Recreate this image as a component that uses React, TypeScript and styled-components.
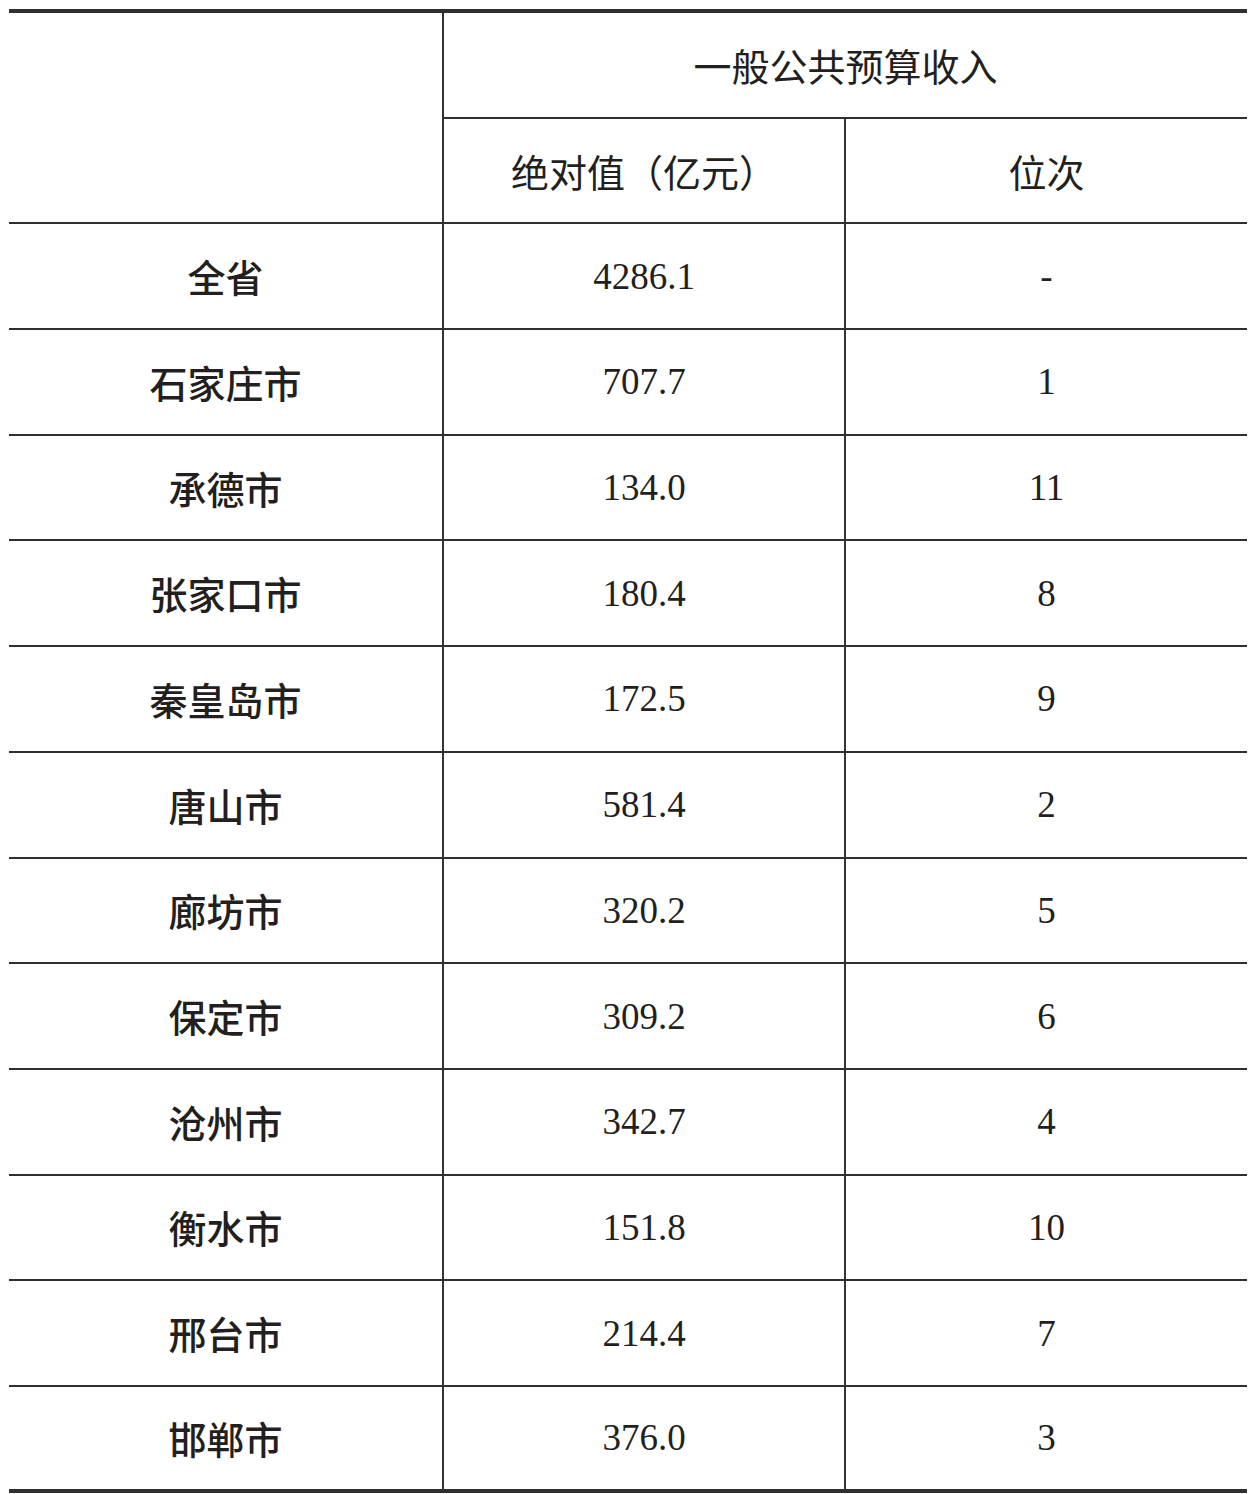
import React from "react";
import styled, { createGlobalStyle } from "styled-components";

const GlobalStyle = createGlobalStyle`
  html, body {
    margin: 0;
    padding: 0;
    background: #ffffff;
  }
  body {
    font-family: "Liberation Serif", "Noto Sans CJK SC", serif;
    color: #231f20;
  }
`;

const Page = styled.div`
  padding: 9px 4px 0 9px;
  width: 1238px;
`;

const Grid = styled.div`
  display: grid;
  grid-template-columns: 435px 402px 401px;
  grid-auto-rows: 105.7px;
  border-top: 4px solid #2f2f2f;
`;

const Cell = styled.div<{ $last?: boolean; $right?: boolean; $rows?: number; $cols?: number }>`
  box-sizing: border-box;
  display: flex;
  align-items: center;
  justify-content: center;
  border-bottom: ${(p) => (p.$last ? "4px" : "2px")} solid #2f2f2f;
  border-right: ${(p) => (p.$right ? "2px solid #333" : "none")};
  font-size: 37px;
  font-weight: 400;
  line-height: 1;
  white-space: nowrap;
  grid-row: ${(p) => (p.$rows ? `span ${p.$rows}` : "auto")};
  grid-column: ${(p) => (p.$cols ? `span ${p.$cols}` : "auto")};
`;

const CjkText = styled.span<{ $bold?: boolean }>`
  font-family: "Noto Sans CJK SC", sans-serif;
  font-size: 38px;
  font-weight: ${(p) => (p.$bold ? 500 : 400)};
  color: #231f20;
`;

const rows: [string, string, string][] = [
  ["全省", "4286.1", "-"],
  ["石家庄市", "707.7", "1"],
  ["承德市", "134.0", "11"],
  ["张家口市", "180.4", "8"],
  ["秦皇岛市", "172.5", "9"],
  ["唐山市", "581.4", "2"],
  ["廊坊市", "320.2", "5"],
  ["保定市", "309.2", "6"],
  ["沧州市", "342.7", "4"],
  ["衡水市", "151.8", "10"],
  ["邢台市", "214.4", "7"],
  ["邯郸市", "376.0", "3"],
];

export default function App() {
  return (
    <>
      <GlobalStyle />
      <Page>
        <Grid>
          <Cell $rows={2} $right />
          <Cell $cols={2}>
            <CjkText>一般公共预算收入</CjkText>
          </Cell>
          <Cell $right>
            <CjkText>绝对值（亿元）</CjkText>
          </Cell>
          <Cell>
            <CjkText>位次</CjkText>
          </Cell>
          {rows.map(([name, value, rank], i) => {
            const last = i === rows.length - 1;
            return (
              <React.Fragment key={name}>
                <Cell $right $last={last}>
                  <CjkText $bold>{name}</CjkText>
                </Cell>
                <Cell $right $last={last}>
                  {value}
                </Cell>
                <Cell $last={last}>{rank}</Cell>
              </React.Fragment>
            );
          })}
        </Grid>
      </Page>
    </>
  );
}
